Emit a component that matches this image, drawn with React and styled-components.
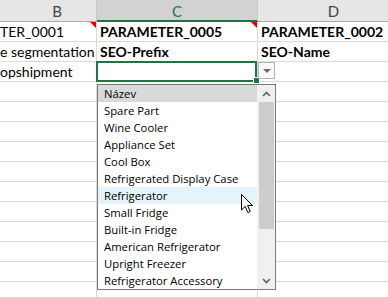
import React from "react"
import styled, { createGlobalStyle, css } from "styled-components"

const GlobalStyle = createGlobalStyle`
  html, body {
    margin: 0;
    padding: 0;
    background: #ffffff;
    overflow: hidden;
  }
`

const green = "#217346"
const gridLine = "#dadada"

const Sheet = styled.div`
  position: relative;
  width: 388px;
  height: 297px;
  overflow: hidden;
  background: #fff;
  font-family: Lato, "Liberation Sans", sans-serif;
`

const Grid = styled.div`
  display: grid;
  grid-template-columns: 97px 161px 152px;
  grid-template-rows: 22px repeat(14, 20px);
`

const Header = styled.div`
  display: flex;
  align-items: center;
  justify-content: center;
  box-sizing: border-box;
  padding-left: ${(p) => p.$indent || 0}px;
  font-size: 15px;
  color: #444;
  background: #e6e6e6;
  border-right: 1px solid #c8c8c8;
  border-bottom: 1px solid #ababab;
  ${(p) =>
    p.$active &&
    css`
      background: #d2d2d2;
      color: ${green};
      border-bottom: 2px solid ${green};
      padding-top: 1px;
    `}
`

const Cell = styled.div`
  position: relative;
  display: flex;
  align-items: center;
  box-sizing: border-box;
  padding: 0 3px;
  font-size: 14px;
  font-weight: ${(p) => (p.$bold ? 700 : 400)};
  color: #000;
  white-space: nowrap;
  overflow: ${(p) => (p.$selected ? "visible" : "hidden")};
  border-right: 1px solid ${gridLine};
  border-bottom: 1px solid ${gridLine};
  ${(p) =>
    p.$comment &&
    css`
      &::before {
        content: "";
        position: absolute;
        top: 0;
        right: 0;
        border-top: 6px solid #e00000;
        border-left: 6px solid transparent;
      }
    `}
  ${(p) =>
    p.$selected &&
    css`
      z-index: 2;
      &::after {
        content: "";
        position: absolute;
        left: -1px;
        top: -1px;
        right: 0;
        bottom: -1px;
        border: 2px solid ${green};
        box-sizing: border-box;
      }
    `}
`

const Clip = styled.span`
  margin-left: ${(p) => p.$shift || 0}px;
`

const FillHandle = styled.div`
  position: absolute;
  right: -3px;
  bottom: -3px;
  width: 5px;
  height: 5px;
  background: ${green};
  border: 1px solid #fff;
  z-index: 3;
`

const DropButton = styled.div`
  position: absolute;
  left: 258px;
  top: 62px;
  width: 17px;
  height: 17px;
  box-sizing: border-box;
  border: 1px solid #b4b4b4;
  background: #fbfbfb;
  display: flex;
  align-items: center;
  justify-content: center;
  z-index: 4;
  &::after {
    content: "";
    border-top: 4px solid #6a6a6a;
    border-left: 4px solid transparent;
    border-right: 4px solid transparent;
  }
`

const ListBox = styled.div`
  position: absolute;
  left: 97px;
  top: 84px;
  width: 179px;
  height: 206px;
  box-sizing: border-box;
  border: 1px solid #7a7a7a;
  background: #fff;
  display: flex;
  z-index: 5;
  font-family: "Open Sans", "Noto Sans", sans-serif;
`

const Items = styled.ul`
  list-style: none;
  margin: 0;
  padding: 0;
  flex: 1;
  border-right: 1px solid #f2f2f2;
`

const Item = styled.li`
  height: 17px;
  line-height: 17px;
  padding-left: 6px;
  font-size: 11.3px;
  color: #000;
  white-space: nowrap;
  overflow: hidden;
  background: ${(p) =>
    p.$selected ? "#d9d9d9" : p.$hover ? "#e5f3fb" : "transparent"};
`

const ScrollBar = styled.div`
  width: 17px;
  display: flex;
  flex-direction: column;
  background: #f0f0f0;
`

const ScrollArrow = styled.div`
  height: 17px;
  display: flex;
  align-items: center;
  justify-content: center;
`

const Track = styled.div`
  flex: 1;
  padding: 0 1px;
`

const Thumb = styled.div`
  height: 127px;
  background: #cdcdcd;
`

const Cursor = styled.svg`
  position: absolute;
  left: 241px;
  top: 194px;
  z-index: 6;
`

const Chevron = ({ up }) => (
  <svg width="9" height="6" viewBox="0 0 9 6">
    <path
      d={up ? "M1 5 L4.5 1.5 L8 5" : "M1 1 L4.5 4.5 L8 1"}
      fill="none"
      stroke="#606060"
      strokeWidth="1.6"
    />
  </svg>
)

const options = [
  "Název",
  "Spare Part",
  "Wine Cooler",
  "Appliance Set",
  "Cool Box",
  "Refrigerated Display Case",
  "Refrigerator",
  "Small Fridge",
  "Built-in Fridge",
  "American Refrigerator",
  "Upright Freezer",
  "Refrigerator Accessory",
]

export default function App() {
  const emptyRows = Array.from({ length: 11 })
  return (
    <>
      <GlobalStyle />
      <Sheet>
        <Grid>
          <Header $indent={18}>B</Header>
          <Header $active>C</Header>
          <Header>D</Header>

          <Cell $comment>
            <Clip $shift={-3}>TER_0001</Clip>
          </Cell>
          <Cell $bold $comment>PARAMETER_0005</Cell>
          <Cell $bold>PARAMETER_0002</Cell>

          <Cell>
            <Clip $shift={-3}>e segmentation</Clip>
          </Cell>
          <Cell $bold>SEO-Prefix</Cell>
          <Cell $bold>SEO-Name</Cell>

          <Cell>
            <Clip $shift={-3}>opshipment</Clip>
          </Cell>
          <Cell $selected>
            <FillHandle />
          </Cell>
          <Cell />

          {emptyRows.map((_, i) => (
            <React.Fragment key={i}>
              <Cell />
              <Cell />
              <Cell />
            </React.Fragment>
          ))}
        </Grid>

        <DropButton />

        <ListBox>
          <Items>
            {options.map((o, i) => (
              <Item key={o} $selected={i === 0} $hover={o === "Refrigerator"}>
                {o}
              </Item>
            ))}
          </Items>
          <ScrollBar>
            <ScrollArrow>
              <Chevron up />
            </ScrollArrow>
            <Track>
              <Thumb />
            </Track>
            <ScrollArrow>
              <Chevron />
            </ScrollArrow>
          </ScrollBar>
        </ListBox>

        <Cursor width="13" height="20" viewBox="0 0 13 20">
          <path
            d="M0.5 0.5 L0.5 16 L4.2 12.4 L6.8 18.6 L9.2 17.6 L6.6 11.5 L11.6 11.5 Z"
            fill="#fff"
            stroke="#000"
            strokeWidth="1"
            strokeLinejoin="round"
          />
        </Cursor>
      </Sheet>
    </>
  )
}
